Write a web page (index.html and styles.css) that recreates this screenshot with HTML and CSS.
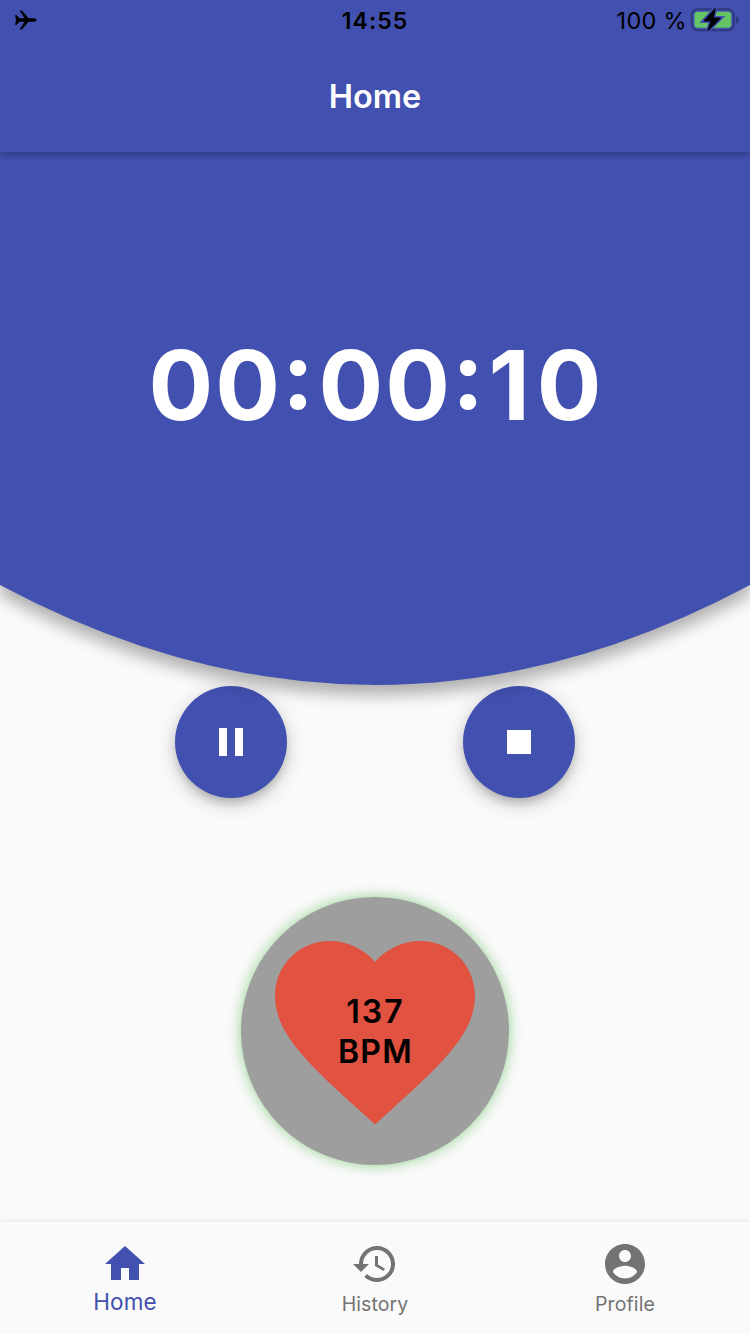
FILE: index.html
```html
<!DOCTYPE html>
<html lang="en">
<head>
<meta charset="utf-8">
<title>Home</title>
<link rel="stylesheet" href="styles.css">
</head>
<body>
<div class="app">
  <header class="top">
    <div class="status">
      <div class="status-left">
        <svg class="plane" viewBox="0 0 22 20"><path d="M0 5.200h1.800L4.600 8.300h5L4.500.6h2.300L13.600 8.300h5.200c1.500 0 2.800.8 2.800 1.700s-1.300 1.700-2.800 1.700h-5.200L6.800 19.400H4.500l5.100-7.700h-5L1.800 14.800H0L1 10z"/></svg>
      </div>
      <div class="clock">14:55</div>
      <div class="status-right">
        <span class="percent">100 %</span>
        <svg class="battery" viewBox="0 0 50 26">
          <rect class="battery-shell" x="1.800" y="2.200" width="42" height="21" rx="6"/>
          <path class="battery-tip" d="M46 9.300c1.800.7 2.800 2 2.800 3.600s-1 2.900-2.800 3.600z"/>
          <rect class="battery-fill" x="4.500" y="4.700" width="36.800" height="16" rx="3.400"/>
          <path class="bolt-edge" d="M25.200 1.500 13.800 14h7.200l-3 9.700L30.600 11h-7.300z"/>
          <path class="bolt" d="M25.200 1.500 13.800 14h7.200l-3 9.700L30.600 11h-7.300z"/>
        </svg>
      </div>
    </div>
    <h1 class="title">Home</h1>
  </header>
  <main class="content">
    <section class="hero">
      <svg class="hero-shape" viewBox="0 0 750 533"><path d="M0 0H750V433Q375 633 0 433Z"/></svg>
      <div class="timer">00<span class="colon">:</span>00<span class="colon">:</span><span class="one">1</span>0</div>
    </section>
    <div class="controls">
      <button class="fab" aria-label="Pause"><svg class="icon" viewBox="0 0 24 24"><path d="M6 19h4V5H6v14zm8-14v14h4V5h-4z"/></svg></button>
      <button class="fab" aria-label="Stop"><svg class="icon" viewBox="0 0 24 24"><path d="M6 6h12v12H6z"/></svg></button>
    </div>
    <section class="pulse">
      <svg class="heart" viewBox="0 0 24 24"><path d="M12 21.35l-1.45-1.32C5.4 15.36 2 12.28 2 8.5 2 5.42 4.42 3 7.5 3c1.74 0 3.41.81 4.5 2.09C13.09 3.81 14.76 3 16.5 3 19.58 3 22 5.42 22 8.5c0 3.78-3.4 6.86-8.55 11.54L12 21.35z"/></svg>
      <div class="bpm"><span class="rate">137</span><span>BPM</span></div>
    </section>
  </main>
  <nav class="tabs">
    <a class="tab active"><svg class="icon" viewBox="0 0 24 24"><path d="M10 20v-6h4v6h5v-8h3L12 3 2 12h3v8z"/></svg><span class="label">Home</span></a>
    <a class="tab"><svg class="icon" viewBox="0 0 24 24"><path d="M13 3c-4.97 0-9 4.03-9 9H1l3.89 3.89.07.14L9 12H6c0-3.87 3.13-7 7-7s7 3.13 7 7-3.13 7-7 7c-1.93 0-3.68-.79-4.94-2.06l-1.42 1.42C8.27 19.99 10.51 21 13 21c4.97 0 9-4.03 9-9s-4.03-9-9-9zm-1 5v5l4.28 2.54.72-1.21-3.5-2.08V8H12z"/></svg><span class="label">History</span></a>
    <a class="tab"><svg class="icon" viewBox="0 0 24 24"><path d="M12 2C6.480 2 2 6.480 2 12s4.480 10 10 10 10-4.480 10-10S17.520 2 12 2zm0 3c1.660 0 3 1.340 3 3s-1.340 3-3 3-3-1.340-3-3 1.340-3 3-3zm0 14.200c-2.500 0-4.710-1.280-6-3.220.03-1.990 4-3.080 6-3.080 1.990 0 5.970 1.090 6 3.080-1.290 1.940-3.500 3.220-6 3.220z"/></svg><span class="label">Profile</span></a>
  </nav>
</div>
</body>
</html>
```
FILE: styles.css
```css
* { box-sizing: border-box; }
body { margin: 0; font-family: Inter, "Liberation Sans", sans-serif; background: #fafafa; }
svg { display: block; }
.app { display: flex; flex-direction: column; width: 750px; height: 1334px; overflow: hidden; }

.top { position: relative; z-index: 2; flex: none; height: 152px; background: #4250af; box-shadow: 0 2px 8px rgba(0,0,0,.32); }
.status { display: grid; grid-template-columns: 1fr auto 1fr; align-items: center; height: 40px; color: #000; }
.status-left { padding-left: 15px; }
.plane { width: 22px; height: 20px; }
.clock { padding-top: 2px; font-size: 23px; font-weight: 600; letter-spacing: 1px; line-height: 38px; }
.status-right { display: flex; justify-content: flex-end; align-items: center; gap: 3px; padding-right: 10px; }
.percent { padding-top: 2px; font-size: 23.5px; letter-spacing: .3px; line-height: 38px; white-space: nowrap; }
.battery { width: 50px; height: 26px; }
.battery-shell { fill: none; stroke: #2e387c; stroke-width: 2; }
.battery-tip { fill: #2e387c; }
.battery-fill { fill: #65c466; }
.bolt-edge { fill: #4250af; stroke: #4250af; stroke-width: 4; }
.bolt { fill: #000; stroke: #000; stroke-width: 1; stroke-linejoin: round; }
.title { margin: 0; height: 112px; padding-top: 1px; line-height: 112px; text-align: center; color: #fff; font-size: 32.5px; font-weight: 600; }

.content { flex: 1; display: flex; flex-direction: column; align-items: center; }
.hero { display: grid; flex: none; width: 750px; height: 533px; }
.hero > * { grid-area: 1 / 1; }
.hero-shape { width: 750px; height: 533px; overflow: visible; fill: #4250af; filter: drop-shadow(0 10px 8px rgba(0,0,0,.3)); }
.timer { z-index: 1; padding: 172px 0 0 2px; text-align: center; color: #fff; font-size: 96px; font-weight: 700; line-height: 122px; letter-spacing: 2px; white-space: nowrap; }
.colon { margin-right: 2.5px; font-feature-settings: "case"; }
.one { margin: 0 5px 0 0; }
.controls { display: flex; flex: none; justify-content: space-evenly; width: 750px; padding-top: .6px; }
.fab { display: grid; place-items: center; width: 112px; height: 112px; padding: 0; border: 0; border-radius: 50%; background: #4250af; color: #fff; box-shadow: 0 6px 10px -2px rgba(0,0,0,.18), 0 6px 20px rgba(0,0,0,.2); }
.icon { width: 48px; height: 48px; fill: currentColor; }
.pulse { display: grid; place-items: center; flex: none; width: 268px; height: 268px; margin-top: 99px; border-radius: 50%; background: #9e9e9e; box-shadow: 0 0 14px rgba(103,190,96,.7); }
.pulse > * { grid-area: 1 / 1; }
.heart { width: 240px; height: 240px; fill: #e15241; }
.bpm { display: flex; flex-direction: column; padding: 3px 0 0 1px; text-align: center; color: #000; font-size: 32px; font-weight: 600; line-height: 40px; letter-spacing: 1.2px; }
.rate { letter-spacing: 2px; }

.tabs { display: grid; grid-template-columns: repeat(3, 1fr); flex: none; height: 112px; padding-top: 18px; background: #fafafa; box-shadow: 0 -1px 5px rgba(0,0,0,.08); }
.tab { display: flex; flex-direction: column; align-items: center; color: #737373; }
.label { margin-top: 3px; font-size: 19.5px; line-height: 26px; letter-spacing: .1px; }
.active { color: #4250af; }
.active .label { margin-top: 1px; font-size: 22.5px; }
```
